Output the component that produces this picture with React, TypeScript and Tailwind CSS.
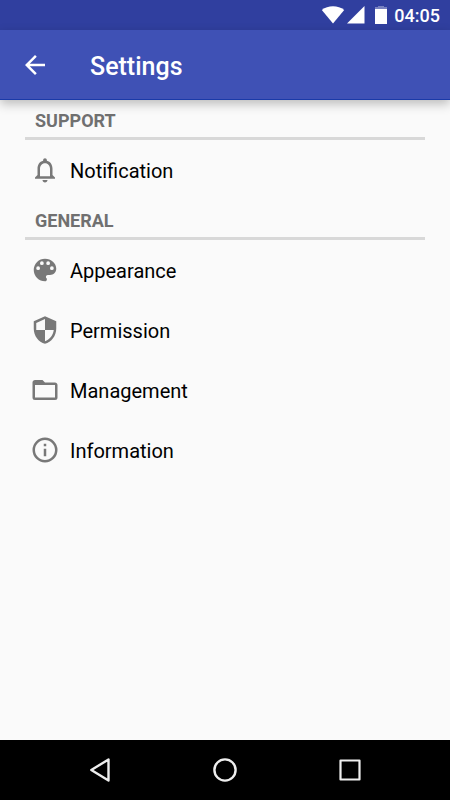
type IconName = 'bell' | 'palette' | 'shield' | 'folder' | 'info';

const iconPaths: Record<IconName, string> = {
	bell: 'M12 22c1.1 0 2-.9 2-2h-4c0 1.1.89 2 2 2zm6-6v-5c0-3.07-1.63-5.64-4.5-6.32V4c0-.83-.67-1.5-1.5-1.5s-1.5.67-1.5 1.5v.68C7.64 5.36 6 7.92 6 11v5l-2 2v1h16v-1l-2-2zm-2 1H8v-6c0-2.48 1.51-4.5 4-4.5s4 2.02 4 4.5v6z',
	palette:
		'M12 3a9 9 0 0 0 0 18c.83 0 1.5-.67 1.5-1.5 0-.39-.15-.74-.39-1.01-.23-.26-.38-.61-.38-.99 0-.83.67-1.5 1.5-1.5H16c2.76 0 5-2.24 5-5 0-4.42-4.03-8-9-8zm-5.5 9a1.5 1.5 0 1 1 0-3 1.5 1.5 0 0 1 0 3zm3-4a1.5 1.5 0 1 1 0-3 1.5 1.5 0 0 1 0 3zm5 0a1.5 1.5 0 1 1 0-3 1.5 1.5 0 0 1 0 3zm3 4a1.5 1.5 0 1 1 0-3 1.5 1.5 0 0 1 0 3z',
	shield:
		'M12 1L3 5v6c0 5.55 3.84 10.74 9 12 5.16-1.26 9-6.45 9-12V5l-9-4zm0 11h7c-.53 4.11-3.28 7.78-7 8.93V12H5V6.3l7-3.11V12z',
	folder:
		'M20 18H4V8h16v10zm0-12h-8l-2-2H4c-1.11 0-2 .89-2 2v12a2 2 0 0 0 2 2h16a2 2 0 0 0 2-2V8c0-1.11-.9-2-2-2z',
	info: 'M11 9h2V7h-2v2zm1 11c-4.41 0-8-3.59-8-8s3.59-8 8-8 8 3.59 8 8-3.59 8-8 8zm0-18a10 10 0 1 0 0 20 10 10 0 0 0 0-20zm-1 15h2v-6h-2v6z',
};

const sections: { title: string; items: { icon: IconName; label: string }[] }[] = [
	{
		title: 'SUPPORT',
		items: [{ icon: 'bell', label: 'Notification' }],
	},
	{
		title: 'GENERAL',
		items: [
			{ icon: 'palette', label: 'Appearance' },
			{ icon: 'shield', label: 'Permission' },
			{ icon: 'folder', label: 'Management' },
			{ icon: 'info', label: 'Information' },
		],
	},
];

const StatusBar = () => (
	<div className="flex h-[30px] items-center justify-end bg-[#303f9f] pr-[10px] text-white">
		<svg className="mr-[2px] h-[18px] w-6" viewBox="0 0 24 18" fill="currentColor">
			<path d="M12 17.5L.8 4C4 1.5 7.8.3 12 .3S20 1.5 23.2 4z" />
		</svg>
		<svg className="mr-[9px] h-[18px] w-[18px]" viewBox="0 0 18 18" fill="currentColor">
			<path d="M0 17.5L17.5 0v17.5z" />
		</svg>
		<svg className="mr-[6px] h-[18px] w-[14px]" viewBox="0 0 14 18" fill="currentColor">
			<path d="M4 0h6v1h3v2H1V1h3z" opacity=".35" />
			<path d="M1 3h12v15H1z" />
		</svg>
		<span className="pt-[2px] text-lg leading-6 font-medium">04:05</span>
	</div>
);

const SettingsRow = ({ icon, label }: { icon: IconName; label: string }) => (
	<li>
		<button type="button" className="flex h-[60px] w-full items-center gap-[10px] px-[5px] text-left">
			<svg className="h-[30px] w-[30px] text-[#787878]" viewBox="0 0 24 24" fill="currentColor">
				<path d={iconPaths[icon]} />
			</svg>
			<span className="pt-[2px] text-xl leading-6 text-black">{label}</span>
		</button>
	</li>
);

const NavigationBar = () => (
	<nav className="flex h-[60px] items-center justify-center gap-[95px] bg-black text-[#eeeeee]">
		<button type="button" aria-label="Back">
			<svg className="h-[30px] w-[30px]" viewBox="0 0 30 30" fill="none" stroke="currentColor" strokeWidth="2.4" strokeLinejoin="round">
				<path d="M23.5 4.5v21L6.3 15z" />
			</svg>
		</button>
		<button type="button" aria-label="Home">
			<svg className="h-[30px] w-[30px]" viewBox="0 0 30 30" fill="none" stroke="currentColor" strokeWidth="2.4">
				<circle cx="15" cy="15" r="10.6" />
			</svg>
		</button>
		<button type="button" aria-label="Recent apps">
			<svg className="h-[30px] w-[30px]" viewBox="0 0 30 30" fill="none" stroke="currentColor" strokeWidth="2.2" strokeLinejoin="round">
				<path d="M5.5 5.5h19v19h-19z" />
			</svg>
		</button>
	</nav>
);

const App = () => {
	return (
		<div className="flex min-h-screen flex-col bg-[#fafafa] font-[Roboto,sans-serif]">
			<StatusBar />
			<header className="relative flex h-[70px] items-center gap-10 border-b border-[#1a3aa8] bg-[#3f51b5] px-5 text-white shadow-[0_4px_10px_rgba(0,0,0,0.25)]">
				<button type="button" aria-label="Navigate up">
					<svg className="h-[30px] w-[30px]" viewBox="0 0 24 24" fill="currentColor">
						<path d="M20 11H7.83l5.59-5.59L12 4l-8 8 8 8 1.41-1.41L7.83 13H20v-2z" />
					</svg>
				</button>
				<h1 className="pt-1 text-[25px] leading-8 font-medium">Settings</h1>
			</header>
			<main className="grow px-[25px]">
				{sections.map((section) => (
					<section key={section.title}>
						<h2 className="h-10 border-b-[3px] border-[#d8d8d8] px-[10px] text-lg leading-[42px] font-bold text-[#707070]">
							{section.title}
						</h2>
						<ul>
							{section.items.map((item) => (
								<SettingsRow key={item.label} icon={item.icon} label={item.label} />
							))}
						</ul>
					</section>
				))}
			</main>
			<NavigationBar />
		</div>
	);
};
export default App;
